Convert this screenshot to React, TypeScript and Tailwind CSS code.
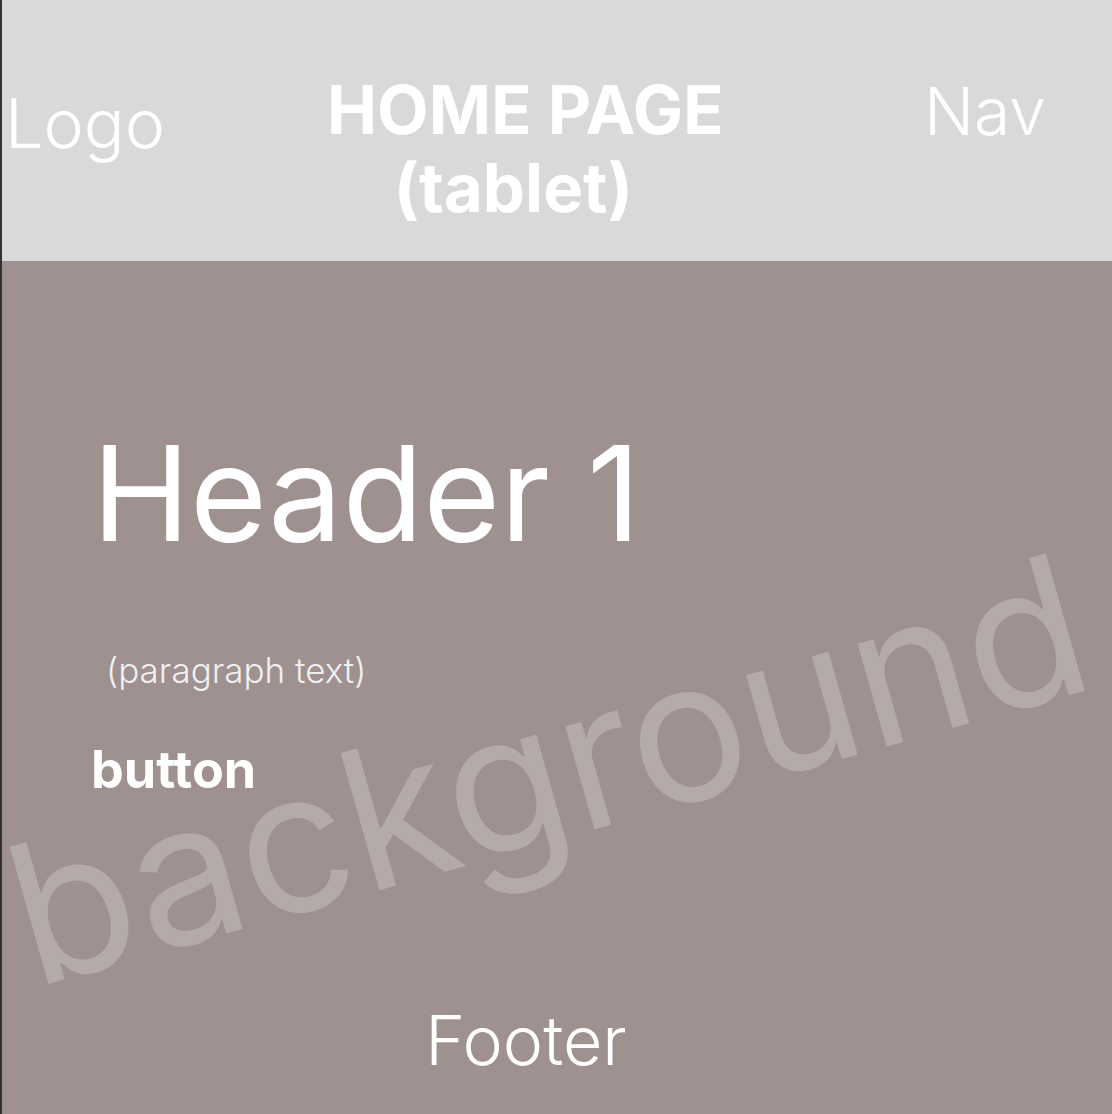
export default function App() {
  return (
    <div className="relative flex h-[1114px] w-[1112px] flex-col overflow-hidden border-l-2 border-[#333333] bg-[#9e9190] font-['Inter',sans-serif] text-white">
      {/* Top bar */}
      <header className="flex h-[261px] shrink-0 items-start bg-[#d9d9d9]">
        <div className="w-[325px] shrink-0 pl-[3px] pt-[89px] text-[68px] font-light leading-none">Logo</div>
        <h1 className="mt-[71px] text-center text-[67px] font-bold leading-[78px]">
          <span className="block">HOME PAGE</span>
          <span className="block pr-[24px]">(tablet)</span>
        </h1>
        <div className="ml-auto mr-[66px] mt-[78px] text-[66px] font-light leading-none">Nav</div>
      </header>

      {/* Hero */}
      <main className="relative z-10 flex flex-1 flex-col items-start pl-[90px]">
        <h2 className="mt-[166px] text-[132px] font-normal leading-none">Header 1</h2>
        <p className="ml-[14px] mt-[94px] text-[35px] font-light leading-none text-[#f0f0f0]">
          (paragraph text)
        </p>
        <button className="-ml-px mt-[56px] text-[52px] font-bold leading-none">button</button>
      </main>

      {/* Watermark */}
      <span className="pointer-events-none absolute left-[32px] top-[819px] origin-[0_169px] -rotate-[15.8deg] whitespace-nowrap text-[196px] font-normal leading-none text-[#b5aaaa]">
        background
      </span>

      <footer className="relative z-10 flex justify-center pb-[40px]">
        <span className="mr-[62px] text-[68px] font-light leading-none">Footer</span>
      </footer>
    </div>
  );
}
